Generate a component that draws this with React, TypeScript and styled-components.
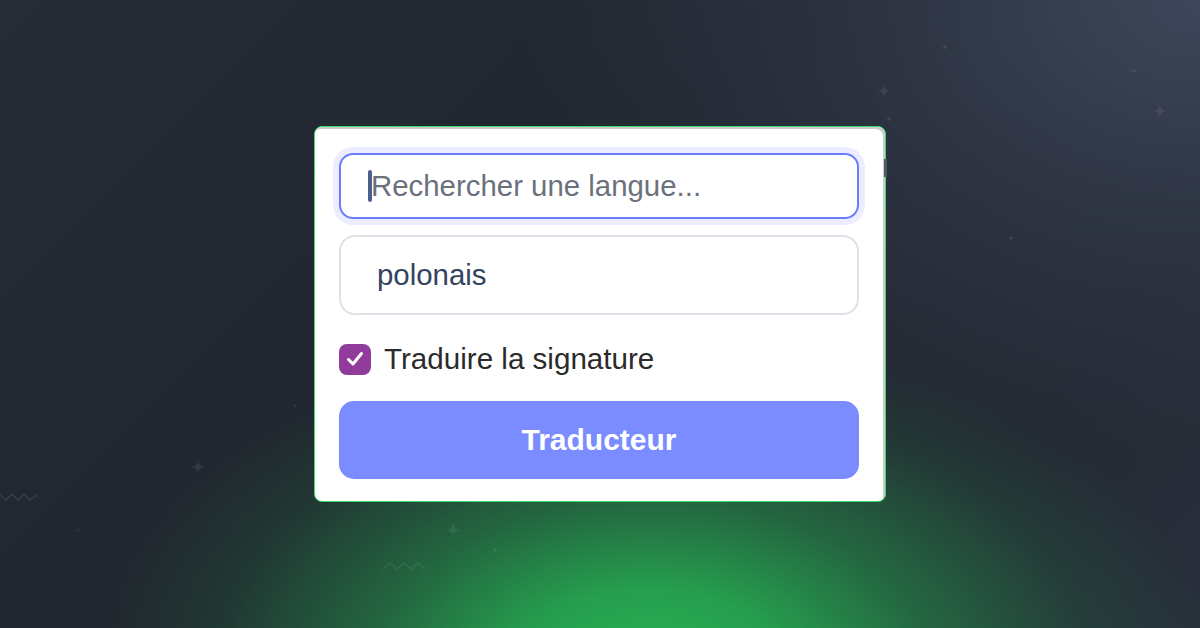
import React from "react";
import styled, { createGlobalStyle } from "styled-components";

const GlobalStyle = createGlobalStyle`
  html, body, #root { margin: 0; padding: 0; width: 100%; height: 100%; }
  body { font-family: "Liberation Sans", Arial, Helvetica, sans-serif; overflow: hidden; }
  * { box-sizing: border-box; }
`;

const Page = styled.main`
  position: relative;
  width: 1200px;
  height: 628px;
  display: flex;
  align-items: center;
  justify-content: center;
  overflow: hidden;
  background:
    radial-gradient(ellipse 560px 340px at 650px 670px, rgba(40, 178, 84, 1) 0%, rgba(38, 168, 80, 0.92) 24%, rgba(36, 135, 72, 0.65) 50%, rgba(34, 98, 62, 0.3) 78%, rgba(34, 80, 60, 0) 100%),
    radial-gradient(ellipse 680px 460px at 1200px 0px, rgba(62, 70, 90, 1) 0%, rgba(54, 62, 80, 0.6) 45%, rgba(40, 46, 60, 0) 100%),
    linear-gradient(135deg, #262c37 0%, #20252e 45%, #232933 80%, #28303c 100%);
`;

const Decor = styled.svg`
  position: absolute;
  inset: 0;
  pointer-events: none;
`;

const Card = styled.section`
  position: relative;
  width: 572px;
  display: flex;
  flex-direction: column;
  padding: 26px 26px 22px 24px;
  background: #ffffff;
  border: 1px solid #3ddc6a;
  border-radius: 8px;
  box-shadow: inset -2px 2px 0 #cbcbcb;
`;

const ScrollThumb = styled.span`
  position: absolute;
  right: -2px;
  top: 32px;
  width: 3px;
  height: 18px;
  background: #4d5c5e;
`;

const SearchWrap = styled.div`
  position: relative;
  height: 66px;
  border-radius: 14px;
  box-shadow: 0 0 0 6px #eceeff;
`;

const SearchInput = styled.input`
  width: 100%;
  height: 100%;
  border: 2px solid #6b7dff;
  border-radius: 14px;
  padding: 0 20px 0 30px;
  font-family: inherit;
  font-size: 29.4px;
  color: #3a4a63;
  background: #fff;
  outline: none;
  &::placeholder { color: #6b717c; }
`;

const Caret = styled.span`
  position: absolute;
  left: 29px;
  top: 17px;
  width: 4px;
  height: 32px;
  border-radius: 2px;
  background: #4a5f8c;
`;

const LanguageBox = styled.div`
  margin-top: 16px;
  height: 80px;
  display: flex;
  align-items: center;
  padding-left: 36px;
  border: 2px solid #dfe0e8;
  border-radius: 16px;
  font-size: 29.4px;
  color: #34435e;
`;

const CheckRow = styled.label`
  margin-top: 27px;
  display: flex;
  align-items: center;
  gap: 13px;
  font-size: 29.6px;
  color: #2b2b2b;
`;

const CheckBox = styled.span`
  width: 32px;
  height: 31px;
  border-radius: 8px;
  background: #913c9c;
  display: flex;
  align-items: center;
  justify-content: center;
`;

const Button = styled.button`
  margin-top: 25px;
  height: 78px;
  border: none;
  border-radius: 15px;
  background: #7a8cff;
  color: #ffffff;
  font-family: inherit;
  font-weight: 700;
  font-size: 30px;
  cursor: pointer;
`;

const star = (x: number, y: number, r: number) =>
  `M${x},${y - r} Q${x},${y} ${x + r},${y} Q${x},${y} ${x},${y + r} Q${x},${y} ${x - r},${y} Q${x},${y} ${x},${y - r} Z`;

const stars: [number, number, number][] = [
  [945, 47, 4],
  [884, 91, 8],
  [889, 119, 4],
  [1134, 71, 4],
  [1160, 111, 8],
  [1011, 238, 4],
  [295, 406, 3],
  [198, 467, 8],
  [78, 530, 3],
  [453, 530, 8],
  [495, 550, 4],
];

export default function App() {
  return (
    <>
      <GlobalStyle />
      <Page>
        <Decor width="1200" height="628" viewBox="0 0 1200 628">
          {stars.map(([x, y, r], i) => (
            <path key={i} d={star(x, y, r)} fill="rgba(255,255,255,0.08)" />
          ))}
          <polyline
            points="0,495 6,500 12,494 18,500 24,494 30,500 37,495"
            fill="none"
            stroke="rgba(255,255,255,0.1)"
            strokeWidth="1.5"
          />
          <polyline
            points="383,569 390,563 397,569 404,563 411,569 418,563 425,569"
            fill="none"
            stroke="rgba(255,255,255,0.08)"
            strokeWidth="1.5"
          />
        </Decor>
        <Card>
          <ScrollThumb />
          <SearchWrap>
            <SearchInput placeholder="Rechercher une langue..." />
            <Caret />
          </SearchWrap>
          <LanguageBox>polonais</LanguageBox>
          <CheckRow>
            <CheckBox>
              <svg width="20" height="20" viewBox="0 0 20 20">
                <path d="M3.5 10.5 L8 15 L16.5 4.5" fill="none" stroke="#fff" strokeWidth="3" strokeLinecap="round" strokeLinejoin="round" />
              </svg>
            </CheckBox>
            Traduire la signature
          </CheckRow>
          <Button>Traducteur</Button>
        </Card>
      </Page>
    </>
  );
}
